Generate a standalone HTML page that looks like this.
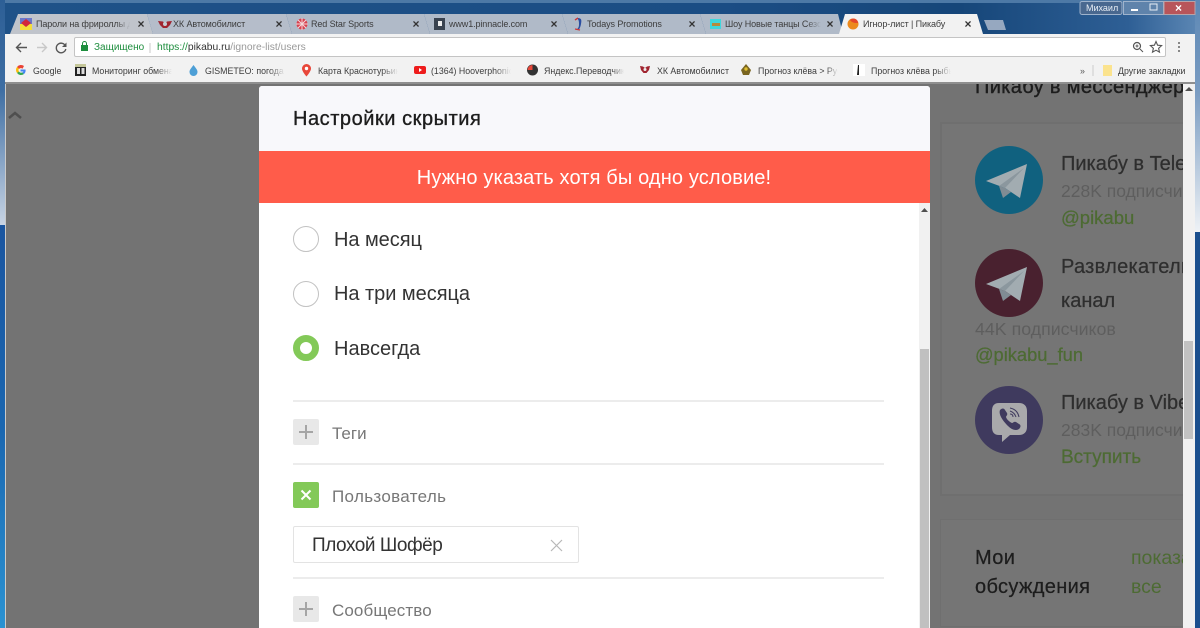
<!DOCTYPE html>
<html><head><meta charset="utf-8">
<style>
html,body{margin:0;padding:0;width:1200px;height:628px;overflow:hidden;background:#1c4f86}
*{box-sizing:border-box}
body{position:relative;font-family:"Liberation Sans","Noto Sans CJK JP",sans-serif}
.a{position:absolute;white-space:nowrap}
.tab{position:absolute;top:14px;height:20px;font-size:9px;letter-spacing:-.1px;line-height:21px;color:#3c3c3c;white-space:nowrap}
.tx{position:absolute;top:18px;width:10px;height:12px;font-size:12px;line-height:12px;color:#333;font-weight:bold;text-align:center}
.bm{position:absolute;top:65px;font-size:8.8px;line-height:12px;color:#3c3c3c;white-space:nowrap}
.pg{position:absolute;white-space:nowrap;overflow:hidden}
.s{-webkit-text-stroke:.25px currentColor}
</style></head><body>
<div class="a" style="left:0;top:0;width:1200px;height:36px;background:linear-gradient(90deg,#1f5288 0,#1b4d84 60%,#164679 80%,#2e5f95 94%,#5d88b5 100%)"></div>
<div class="a" style="left:0;top:0;width:1200px;height:3px;background:#4d79a6"></div>
<div class="a" style="left:0;top:0;width:5px;height:225px;background:linear-gradient(180deg,#2d5f96 0,#3e6ea3 40%,#c8d4e4 100%)"></div>
<div class="a" style="left:0;top:225px;width:5px;height:403px;background:linear-gradient(180deg,#1a55a0 0,#1a66b0 50%,#2a92d2 100%)"></div>
<div class="a" style="left:1195px;top:0;width:5px;height:232px;background:linear-gradient(180deg,#5d88b5 0,#7a9cc2 40%,#eef2f6 100%)"></div>
<div class="a" style="left:1195px;top:232px;width:5px;height:396px;background:#1b4f8e"></div>

<svg class="a" style="left:0;top:0" width="1200" height="36">
<path d="M10 34 L18 14 H147 L153 34Z" fill="#c0c4cb"/>
<path d="M153 34 L147 14 H286 L292 34Z" fill="#b5bdca"/>
<path d="M292 34 L286 14 H424 L430 34Z" fill="#b0bac8"/>
<path d="M430 34 L424 14 H562 L568 34Z" fill="#b0bac8"/>
<path d="M568 34 L562 14 H700 L706 34Z" fill="#b0bac8"/>
<path d="M706 34 L700 14 H838 L843 34Z" fill="#b0bac8"/>
<path d="M839 34 L845 14 H977 L983 34Z" fill="#f2f2f2"/>
<path d="M984 20 H1003 L1006 30 H988Z" fill="#96a8c0"/>
<rect x="1080" y="1.500" width="42" height="13" rx="2" fill="#49688f" stroke="#9fb3cc"/>
<rect x="1123.500" y="1.500" width="40" height="13" fill="#5f83ab" stroke="#9fb3cc"/>
<rect x="1164" y="1.500" width="31" height="13" fill="#b8555a" stroke="#b7a3a8"/>
<rect x="1131" y="9" width="7" height="2" fill="#fff"/>
<rect x="1150" y="4" width="7" height="6" fill="none" stroke="#e5edf5"/>
</svg>
<div class="a" style="left:1086px;top:2px;font-size:9px;line-height:12px;color:#e8eef5">Михаил</div>
<div class="a" style="left:1175px;top:2px;font-size:12px;line-height:12px;color:#fff;font-weight:bold">×</div>

<!-- favicons -->
<svg class="a" style="left:0;top:0" width="1200" height="36">
<rect x="20" y="18" width="12" height="12" fill="#f4dd3a"/><path d="M20 18h12v6H20z" fill="#6a77c9"/><path d="M26 19l5 4-5 4-5-4z" fill="#d3273a"/>
<path d="M158 21l5 .5 2 2 2-2 5-.5-2 4-3 3h-4l-3-3z" fill="#a0242f"/><circle cx="165" cy="24" r="2" fill="#c8ccd4"/>
<circle cx="302" cy="24" r="5.500" fill="#d8404e"/><path d="M296 24h12M302 18v12M298 20l8 8M306 20l-8 8" stroke="#f3d7da" stroke-width="1"/>
<rect x="434" y="18" width="11" height="12" fill="#3a4350"/><rect x="438" y="21" width="4" height="5" fill="#eee"/>
<path d="M577 18c4 0 5 1 4 6s-2 6-5 6c3-2 3-4 3-6s0-4-2-6z" fill="#2a4da0"/><path d="M575 20l3-2M575 29l5 1" stroke="#c9383c" stroke-width="1.400"/>
<rect x="710" y="19" width="11" height="10" fill="#3fd6dc"/><rect x="712" y="23" width="8" height="3" fill="#b58a3c"/>
<circle cx="853" cy="24" r="5.500" fill="#ec8a1d"/><path d="M850 20c3-3 8-1 8 3-3 0-6 0-8-3z" fill="#e4482b"/>
</svg>
<div class="tab" style="left:36px;width:94px;overflow:hidden;-webkit-mask-image:linear-gradient(90deg,#000 85%,transparent)">Пароли на фрироллы для</div>
<div class="tab" style="left:173px">ХК Автомобилист</div>
<div class="tab" style="left:311px">Red Star Sports</div>
<div class="tab" style="left:449px">www1.pinnacle.com</div>
<div class="tab" style="left:587px">Todays Promotions</div>
<div class="tab" style="left:725px;width:96px;overflow:hidden;-webkit-mask-image:linear-gradient(90deg,#000 85%,transparent)">Шоу Новые танцы Сезон</div>
<div class="tab" style="left:863px">Игнор-лист | Пикабу</div>
<div class="tx" style="left:136px">×</div><div class="tx" style="left:274px">×</div><div class="tx" style="left:411px">×</div><div class="tx" style="left:549px">×</div><div class="tx" style="left:687px">×</div><div class="tx" style="left:825px">×</div><div class="tx" style="left:963px">×</div>

<!-- toolbar -->
<div class="a" style="left:5px;top:34px;width:1190px;height:49px;background:#f2f2f2"></div>
<div class="a" style="left:5px;top:82px;width:1190px;height:2px;background:#8f8f8f"></div>
<div class="a" style="left:74px;top:37px;width:1092px;height:20px;background:#fff;border:1px solid #c4c4c4;border-radius:2px"></div>
<svg class="a" style="left:0;top:34px" width="1200" height="24">
<path d="M27 13.500H17M21 9l-4.500 4.500L21 18" stroke="#555" stroke-width="1.400" fill="none"/>
<path d="M37 13.500H46M42 9l4.500 4.500L42 18" stroke="#c8c8c8" stroke-width="1.400" fill="none"/>
<path d="M65.500 12a4.800 4.800 0 1 0 .3 3" stroke="#555" stroke-width="1.400" fill="none"/><path d="M66.500 8.500v4.500h-4.500z" fill="#555"/>
<rect x="81" y="11" width="7" height="6" fill="#1e8e3e"/><path d="M82.500 11V9.500a2 2 0 0 1 4 0V11" stroke="#1e8e3e" fill="none"/>
<path d="M150 9v10" stroke="#c8c8c8"/>
<circle cx="1137" cy="12" r="3.500" stroke="#555" stroke-width="1.200" fill="none"/><path d="M1140 15l3 3M1135.500 12h3M1137 10.500v3" stroke="#555" stroke-width="1"/>
<path d="M1156 7.500l1.600 3.700 4 .4-3 2.700.9 3.900-3.500-2-3.500 2 .9-3.900-3-2.700 4-.4z" stroke="#555" stroke-width="1.100" fill="none"/>
<circle cx="1179" cy="9" r="1" fill="#666"/><circle cx="1179" cy="13" r="1" fill="#666"/><circle cx="1179" cy="17" r="1" fill="#666"/>
</svg>
<div class="a" style="left:94px;top:42px;font-size:10px;line-height:12px;color:#1e8e3e">Защищено</div>
<div class="a" style="left:157px;top:42px;font-size:10.300px;line-height:12px;color:#999"><span style="color:#1e8e3e">https://</span><span style="color:#333">pikabu.ru</span>/ignore-list/users</div>

<!-- bookmarks -->
<svg class="a" style="left:-2px;top:62px" width="40" height="18">
<path d="M26 4a5 5 0 0 0-7 1l2 2a2.500 2.500 0 0 1 3.500-.3z" fill="#ea4335"/><path d="M19 5a5 5 0 0 0 0 6l2-1.500a2.500 2.500 0 0 1 0-3z" fill="#fbbc05"/><path d="M19 11a5 5 0 0 0 7 1l-1.800-1.600a2.500 2.500 0 0 1-3.200-.9z" fill="#34a853"/><path d="M27.500 7.500h-5v2h3a2.500 2.500 0 0 1-1.300 1l1.800 1.500c1.500-1.200 1.800-3 1.500-4.500z" fill="#4285f4"/>
</svg>
<svg class="a" style="left:0;top:62px" width="1200" height="18">
<rect x="75" y="2" width="11" height="12" fill="#222"/><path d="M75 2h11v3H75z" fill="#c5c79a"/><rect x="77" y="6" width="3" height="6" fill="#ddd"/><rect x="81.500" y="6" width="3" height="6" fill="#ddd"/>
<path d="M193.500 3c3 4 4 5 4 7a4 4 0 0 1-8 0c0-2 1-3 4-7z" fill="#4d9fd6"/>
<path d="M306.500 2a4.500 4.500 0 0 0-4.500 4.500c0 3 4.500 8 4.500 8s4.500-5 4.500-8a4.500 4.500 0 0 0-4.500-4.500z" fill="#e8473a"/><circle cx="306.500" cy="6.500" r="1.700" fill="#fff"/>
<rect x="414" y="4" width="12" height="8" rx="2" fill="#ee1c1c"/><path d="M419 6l3 2-3 2z" fill="#fff"/>
<circle cx="532.500" cy="8" r="5.500" fill="#333"/><path d="M527.500 8a5 5 0 0 1 5-5v5z" fill="#e8473a"/>
<path d="M640 4l3 .5 2 1.500 2-1.500 3-.5-1 4-2.500 3h-3L641 8z" fill="#a0242f"/><circle cx="645" cy="7.500" r="1.500" fill="#eee"/>
<path d="M741 8l5-6 5 6-2 5h-6z" fill="#7a6520"/><circle cx="746" cy="7" r="1.700" fill="#e0c030"/>
<rect x="853" y="2" width="12" height="12" fill="#fff"/><path d="M858 3l1 0 0 10-2 0z" fill="#222"/>
<path d="M1093 3v11" stroke="#ccc"/>
<path d="M1103 3h9v11h-9z" fill="#fbe38e"/>
</svg>
<div class="bm" style="left:33px">Google</div>
<div class="bm" style="left:92px;width:80px;overflow:hidden;-webkit-mask-image:linear-gradient(90deg,#000 80%,transparent)">Мониторинг обмена</div>
<div class="bm" style="left:205px;width:80px;overflow:hidden;-webkit-mask-image:linear-gradient(90deg,#000 80%,transparent)">GISMETEO: погода в Кр</div>
<div class="bm" style="left:318px;width:80px;overflow:hidden;-webkit-mask-image:linear-gradient(90deg,#000 80%,transparent)">Карта Краснотурьинск</div>
<div class="bm" style="left:431px;width:80px;overflow:hidden;-webkit-mask-image:linear-gradient(90deg,#000 80%,transparent)">(1364) Hooverphonic</div>
<div class="bm" style="left:544px;width:80px;overflow:hidden;-webkit-mask-image:linear-gradient(90deg,#000 85%,transparent)">Яндекс.Переводчик</div>
<div class="bm" style="left:657px">ХК Автомобилист</div>
<div class="bm" style="left:758px;width:80px;overflow:hidden;-webkit-mask-image:linear-gradient(90deg,#000 85%,transparent)">Прогноз клёва &gt; Русь</div>
<div class="bm" style="left:871px;width:80px;overflow:hidden;-webkit-mask-image:linear-gradient(90deg,#000 80%,transparent)">Прогноз клёва рыбы</div>
<div class="bm" style="left:1080px;color:#555">»</div>
<div class="bm" style="left:1118px">Другие закладки</div>

<!-- page overlay -->
<div class="a" style="left:5px;top:84px;width:1178px;height:544px;background:#737373;border-left:1px solid #c9c9c9"></div>
<svg class="a" style="left:8px;top:110px" width="14" height="10"><path d="M1 8l6-5 6 5" stroke="#4f4f4f" stroke-width="2.500" fill="none"/></svg>

<!-- right column -->
<div class="a" style="left:940px;top:122px;width:243px;height:374px;background:#757575;border:2px solid #6f6f6f;border-right:0"></div>
<div class="a" style="left:940px;top:519px;width:243px;height:108px;background:#757575;border:1px solid #6f6f6f;border-right:0"></div>
<div class="pg" style="left:975px;top:84px;width:208px;height:14px;font-size:20px;line-height:14px;color:#1d1d1d;letter-spacing:.35px;-webkit-text-stroke:.4px #1d1d1d"><span style="position:relative;top:-4px">Пикабу в мессенджерах</span></div>

<svg class="a" style="left:975px;top:146px" width="68" height="68"><circle cx="34" cy="34" r="34" fill="#10617f"/><path d="M11 35L52 18 45 52 30 42z" fill="#a2acb1"/><path d="M24 40l25-18L30 42z" fill="#8b979e"/><path d="M24 40l4 12 8-6-6-4z" fill="#808c94"/></svg>
<svg class="a" style="left:975px;top:249px" width="68" height="68"><circle cx="34" cy="34" r="34" fill="#49212f"/><path d="M11 35L52 18 45 52 30 42z" fill="#a2acb1"/><path d="M24 40l25-18L30 42z" fill="#8b979e"/><path d="M24 40l4 12 8-6-6-4z" fill="#808c94"/></svg>
<svg class="a" style="left:975px;top:386px" width="68" height="68"><circle cx="34" cy="34" r="34" fill="#3f3a5e"/><path d="M24 17h20c5 0 8 3 8 8v16c0 5-3 8-8 8H35l-8 7v-7h-3c-5 0-7-3-7-8V25c0-5 2-8 7-8z" fill="#a9a9ab"/><path d="M25 24c2-2 4-2 5 0l2 3c1 2-1 3-1 4 1 3 4 5 6 6 1 0 2-2 4-1l3 2c2 1 2 3 0 5-3 2-7 1-11-3s-10-11-8-16z" fill="#3f3a5e"/><path d="M35 22c5 1 8 4 9 9M35 25c3 1 5 3 6 6M35 28c2 0 3 1 3 3" stroke="#3f3a5e" stroke-width="1" fill="none"/></svg>

<div class="pg s" style="left:1061px;top:150px;width:122px;height:28px;font-size:20px;line-height:28px;color:#2e2e2e">Пикабу в Telegram</div>
<div class="pg" style="left:1061px;top:179px;width:122px;height:24px;font-size:17.500px;line-height:24px;color:#5e5e5e">228K подписчиков</div>
<div class="pg s" style="left:1061px;top:204px;width:122px;height:28px;font-size:18.500px;line-height:28px;color:#4d6b33">@pikabu</div>
<div class="pg s" style="left:1061px;top:253px;width:122px;height:28px;font-size:20px;line-height:28px;color:#2e2e2e;letter-spacing:.3px">Развлекательный</div>
<div class="pg s" style="left:1061px;top:287px;width:122px;height:28px;font-size:20px;line-height:28px;color:#2e2e2e">канал</div>
<div class="pg" style="left:975px;top:317px;width:208px;height:24px;font-size:17.800px;line-height:24px;color:#5e5e5e">44K подписчиков</div>
<div class="pg s" style="left:975px;top:341px;width:208px;height:28px;font-size:18.300px;line-height:28px;color:#4d6b33">@pikabu_fun</div>
<div class="pg s" style="left:1061px;top:389px;width:122px;height:28px;font-size:20px;line-height:28px;color:#2e2e2e">Пикабу в Viber</div>
<div class="pg" style="left:1061px;top:418px;width:122px;height:24px;font-size:17.500px;line-height:24px;color:#5e5e5e">283K подписчиков</div>
<div class="pg s" style="left:1061px;top:444px;width:122px;height:28px;font-size:19px;line-height:28px;color:#4d6b33">Вступить</div>
<div class="pg s" style="left:975px;top:544px;width:125px;height:29px;font-size:20px;line-height:29px;color:#1d1d1d;letter-spacing:.35px">Мои</div>
<div class="pg s" style="left:975px;top:573px;width:125px;height:29px;font-size:20px;line-height:29px;color:#1d1d1d;letter-spacing:.35px">обсуждения</div>
<div class="pg" style="left:1131px;top:544px;width:52px;height:29px;font-size:19.500px;line-height:29px;color:#4d6b33">показать</div>
<div class="pg" style="left:1131px;top:573px;width:52px;height:29px;font-size:19.500px;line-height:29px;color:#4d6b33">все</div>

<!-- outer scrollbar -->
<div class="a" style="left:1183px;top:84px;width:12px;height:544px;background:#f1f1f1"></div>
<div class="a" style="left:1184px;top:341px;width:9px;height:98px;background:#c2c2c2"></div>
<svg class="a" style="left:1184px;top:85px" width="10" height="8"><path d="M1 6L5 2l4 4z" fill="#505050"/></svg>

<!-- modal -->
<div class="a" style="left:259px;top:86px;width:671px;height:542px;background:#fff;border-radius:3px 3px 0 0"></div>
<div class="a" style="left:259px;top:86px;width:671px;height:65px;background:#f8f8fb;border-radius:3px 3px 0 0"></div>
<div class="a" style="left:293px;top:106px;font-size:20px;line-height:26px;color:#1d1d1d;letter-spacing:.55px;-webkit-text-stroke:.35px #1d1d1d">Настройки скрытия</div>
<div class="a" style="left:259px;top:151px;width:671px;height:52px;background:#ff5c4a;color:#fff;font-size:20px;line-height:55px;text-align:center;padding-right:1px;letter-spacing:.14px">Нужно указать хотя бы одно условие!</div>

<div class="a" style="left:919px;top:203px;width:11px;height:425px;background:#f1f1f1"></div>
<div class="a" style="left:920px;top:349px;width:9px;height:279px;background:#c0c0c0"></div>
<svg class="a" style="left:920px;top:206px" width="9" height="8"><path d="M1 6L4.500 2 8 6z" fill="#505050"/></svg>

<div class="a" style="left:293px;top:226px;width:26px;height:26px;border-radius:50%;border:1.500px solid #c2c2c2"></div>
<div class="a" style="left:293px;top:281px;width:26px;height:26px;border-radius:50%;border:1.500px solid #c2c2c2"></div>
<div class="a" style="left:293px;top:335px;width:26px;height:26px;border-radius:50%;border:7.500px solid #83c958;background:#fff"></div>
<div class="a" style="left:334px;top:227px;font-size:20px;line-height:26px;color:#333;letter-spacing:-.05px">На месяц</div>
<div class="a" style="left:334px;top:281px;font-size:20px;line-height:26px;color:#333;letter-spacing:-.03px">На три месяца</div>
<div class="a" style="left:334px;top:336px;font-size:20px;line-height:26px;color:#333">Навсегда</div>

<div class="a" style="left:293px;top:400px;width:591px;height:2px;background:#ececec"></div>
<div class="a" style="left:293px;top:463px;width:591px;height:2px;background:#ececec"></div>
<div class="a" style="left:293px;top:577px;width:591px;height:2px;background:#ececec"></div>

<svg class="a" style="left:293px;top:419px" width="26" height="26"><rect width="26" height="26" rx="2" fill="#e8e8e8"/><path d="M13 6v14M6 13h14" stroke="#a5a5a5" stroke-width="2"/></svg>
<svg class="a" style="left:293px;top:482px" width="26" height="26"><rect width="26" height="26" rx="2" fill="#83c958"/><path d="M8.500 8.500l9 9M17.500 8.500l-9 9" stroke="#fff" stroke-width="2"/></svg>
<svg class="a" style="left:293px;top:596px" width="26" height="26"><rect width="26" height="26" rx="2" fill="#e8e8e8"/><path d="M13 6v14M6 13h14" stroke="#a5a5a5" stroke-width="2"/></svg>
<div class="a" style="left:332px;top:421px;font-size:17px;line-height:25px;color:#777">Теги</div>
<div class="a" style="left:332px;top:484px;font-size:17px;line-height:25px;color:#777;letter-spacing:.33px">Пользователь</div>
<div class="a" style="left:332px;top:598px;font-size:17px;line-height:25px;color:#777;letter-spacing:.1px">Сообщество</div>

<div class="a" style="left:293px;top:526px;width:286px;height:37px;border:1px solid #e3e3e3;border-radius:2px;background:#fff"></div>
<div class="a" style="left:312px;top:533px;font-size:19px;line-height:26px;color:#333;letter-spacing:-.45px">Плохой Шофёр</div>
<svg class="a" style="left:550px;top:539px" width="13" height="13"><path d="M1 1l11 11M12 1L1 12" stroke="#b8b8b8" stroke-width="1.200"/></svg>
</body></html>
